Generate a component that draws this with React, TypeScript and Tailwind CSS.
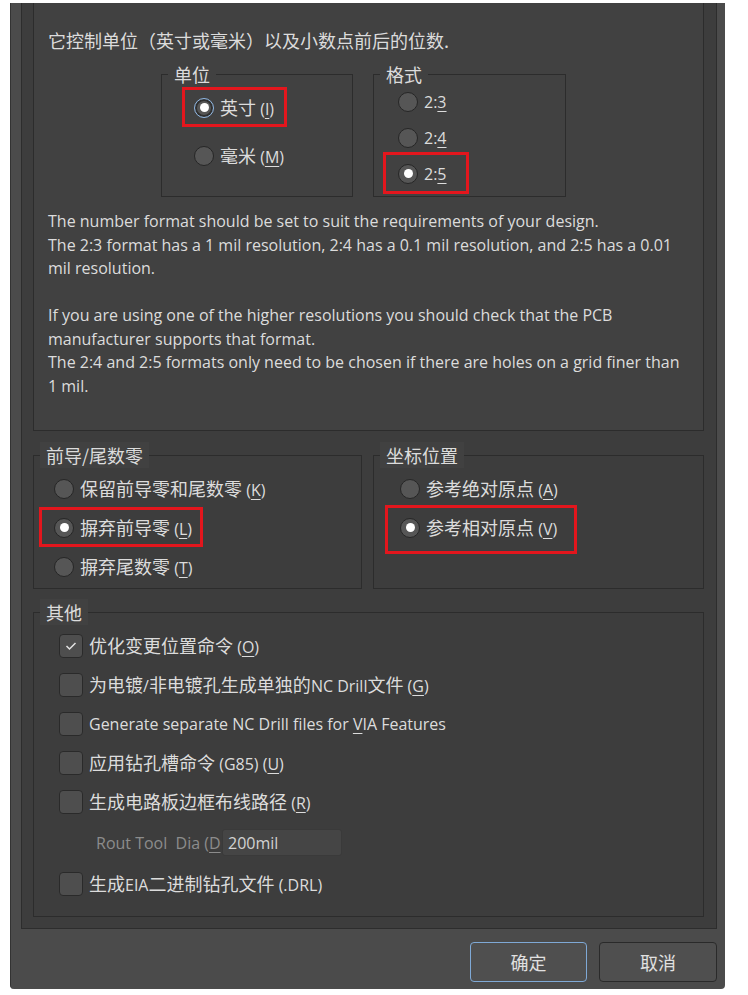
import React from 'react';

const cjk = { fontFamily: '"Noto Sans CJK SC", "Open Sans", sans-serif' };
const latin = { fontFamily: '"Open Sans", "Noto Sans CJK SC", sans-serif' };

const U = ({ children }: { children: React.ReactNode }) => <u className="underline-offset-[3px]">{children}</u>;

// "&X" marks the underlined accelerator key; CJK runs get the larger CJK face
function Label({ text }: { text: string }) {
  const parts: React.ReactNode[] = [];
  const re = /&(.)|([\u2e80-\u9fff\uff00-\uffef]+)|([^&\u2e80-\u9fff\uff00-\uffef]+)/g;
  let m: RegExpExecArray | null;
  let i = 0;
  while ((m = re.exec(text))) {
    if (m[1]) parts.push(<U key={i++}>{m[1]}</U>);
    else if (m[2])
      parts.push(
        <span key={i++} className="text-[18px]" style={cjk}>
          {m[2]}
        </span>
      );
    else parts.push(<span key={i++}>{m[3]}</span>);
  }
  return <span className="whitespace-pre">{parts}</span>;
}

function GroupBox({ label, className, children }: { label: string; className: string; children: React.ReactNode }) {
  return (
    <div className={`relative border border-[#2c2c2c] ${className}`}>
      <span className="absolute left-[6px] -top-[14px] px-[6px] bg-[#414141] text-[18px] leading-[26px] text-[#dcdcdc]" style={cjk}>
        {label}
      </span>
      {children}
    </div>
  );
}

function Radio({ checked, focus }: { checked?: boolean; focus?: boolean }) {
  return (
    <span
      className={`flex shrink-0 items-center justify-center w-[20px] h-[20px] rounded-full bg-[#565656] ${
        focus ? 'border-[1.5px] border-[#8fb7e3] shadow-[inset_0_0_0_2px_#2f2f2f]' : 'border border-[#262626]'
      }`}
    >
      {checked && <span className="w-[9px] h-[9px] rounded-full bg-white" />}
    </span>
  );
}

function RadioRow({ checked, focus, text, mark }: { checked?: boolean; focus?: boolean; text: string; mark?: string }) {
  return (
    <div className="relative flex items-center h-[19px] gap-[6px] text-[16px] text-[#dcdcdc] whitespace-nowrap" style={latin}>
      <Radio checked={checked} focus={focus} />
      <Label text={text} />
      {mark && <div className={`absolute border-[3px] border-[#e3161d] ${mark}`} />}
    </div>
  );
}

function Check({ checked, text }: { checked?: boolean; text: string }) {
  return (
    <div className="flex items-center h-[23px] gap-[6px] text-[16px] text-[#dcdcdc] whitespace-nowrap" style={latin}>
      <span className="flex shrink-0 items-center justify-center w-[24px] h-[24px] rounded-[4px] bg-[#4e4e4e] border border-[#2a2a2a]">
        {checked && (
          <svg width="12" height="10" viewBox="0 0 12 10">
            <path d="M1.5 5 L4.5 8 L10.5 2" fill="none" stroke="#e2e2e2" strokeWidth="1.5" />
          </svg>
        )}
      </span>
      <Label text={text} />
    </div>
  );
}

export default function App() {
  return (
    <div className="min-h-screen bg-white pt-[3px] pl-[10px]" style={cjk}>
      <div className="w-[715px] h-[986px] flex flex-col bg-[#4b4b4b] border-l border-[#333333] rounded-b-[4px]">
        <div className="ml-[10px] w-[696px] h-[926px] flex flex-col border-x border-b border-[#2d2d2d] bg-[#3d3d3d] pl-[11px] pr-[12px]">
          {/* top section */}
          <div className="h-[428px] border-x border-b border-[#2c2c2c] bg-[#414141] pl-[14px] pt-[24px]">
            <p className="text-[18px] leading-[26px] text-[#dcdcdc]">它控制单位（英寸或毫米）以及小数点前后的位数.</p>
            <div className="flex gap-[20px] ml-[113px] mt-[21px]">
              <GroupBox label="单位" className="w-[192px] h-[123px] pl-[32px] pt-[23px] flex flex-col gap-[29px]">
                <RadioRow checked focus text="英寸 (&I)" mark="-left-[12px] -top-[11px] w-[105px] h-[40px]" />
                <RadioRow text="毫米 (&M)" />
              </GroupBox>
              <GroupBox label="格式" className="w-[193px] h-[123px] pl-[24px] pt-[17px] flex flex-col gap-[17px]">
                <RadioRow text="2:&3" />
                <RadioRow text="2:&4" />
                <RadioRow checked text="2:&5" mark="-left-[15px] -top-[12px] w-[86px] h-[42px]" />
              </GroupBox>
            </div>
            <div className="mt-[13px] text-[16px] leading-[23.5px] text-[#dcdcdc] pr-[16px]" style={latin}>
              <p>The number format should be set to suit the requirements of your design.</p>
              <p>The 2:3 format has a 1 mil resolution, 2:4 has a 0.1 mil resolution, and 2:5 has a 0.01 mil resolution.</p>
              <p className="mt-[23.5px]">If you are using one of the higher resolutions you should check that the PCB manufacturer supports that format.</p>
              <p>The 2:4 and 2:5 formats only need to be chosen if there are holes on a grid finer than 1 mil.</p>
            </div>
          </div>

          {/* middle row */}
          <div className="flex gap-[11px] mt-[24px]">
            <GroupBox label="前导/尾数零" className="w-[329px] h-[134px] pl-[20px] pt-[23px] flex flex-col gap-[20px]">
              <RadioRow text="保留前导零和尾数零 (&K)" />
              <RadioRow checked text="摒弃前导零 (&L)" mark="-left-[15px] -top-[11px] w-[164px] h-[40px]" />
              <RadioRow text="摒弃尾数零 (&T)" />
            </GroupBox>
            <GroupBox label="坐标位置" className="w-[331px] h-[134px] pl-[26px] pt-[23px] flex flex-col gap-[20px]">
              <RadioRow text="参考绝对原点 (&A)" />
              <RadioRow checked text="参考相对原点 (&V)" mark="-left-[15px] -top-[13px] w-[192px] h-[49px]" />
            </GroupBox>
          </div>

          {/* other */}
          <GroupBox label="其他" className="mt-[23px] h-[305px] pl-[25px] pt-[21px] flex flex-col gap-[16px]">
            <Check checked text="优化变更位置命令 (&O)" />
            <Check text="为电镀/非电镀孔生成单独的NC Drill文件 (&G)" />
            <Check text="Generate separate NC Drill files for &VIA Features" />
            <Check text="应用钻孔槽命令 (G85) (&U)" />
            <Check text="生成电路板边框布线路径 (&R)" />
            <div className="flex items-center h-[27px] pl-[37px]" style={latin}>
              <span className="w-[126px] whitespace-pre text-[16px] text-[#8c8c8c]">
                Rout Tool  Dia (<U>D</U>
              </span>
              <span className="flex items-center w-[120px] h-[27px] rounded-[3px] bg-[#454545] border border-[#3a3a3a] pl-[5px] text-[16px] text-[#d2d2d2]">
                200mil
              </span>
            </div>
            <Check text="生成EIA二进制钻孔文件 (.DRL)" />
          </GroupBox>
        </div>

        {/* buttons */}
        <div className="flex justify-end gap-[12px] pr-[8px] pt-[13px]">
          <button className="w-[117px] h-[40px] rounded-[4px] bg-[#4f4f4f] border border-[#7fa9d6] text-[18px] text-[#e0e0e0]">确定</button>
          <button className="w-[118px] h-[40px] rounded-[4px] bg-[#4f4f4f] border border-[#2a2a2a] text-[18px] text-[#e0e0e0]">取消</button>
        </div>
      </div>
    </div>
  );
}
